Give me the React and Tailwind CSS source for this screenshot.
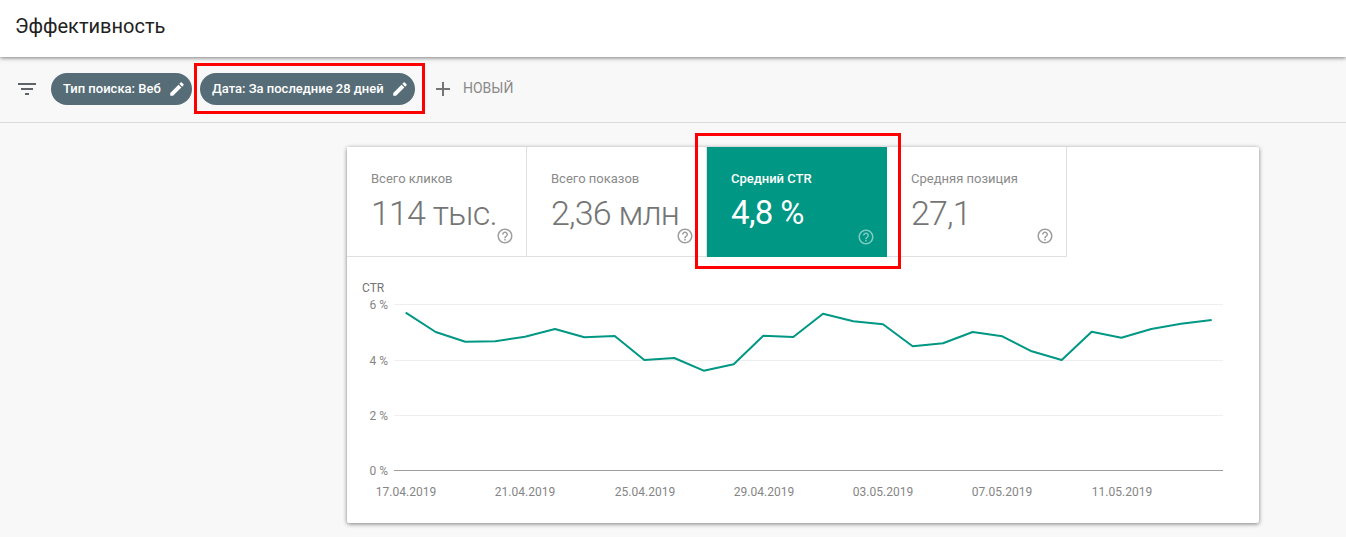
const EDIT = "M3 17.25V21h3.75L17.81 9.94l-3.75-3.75L3 17.25zM20.71 7.04c.39-.39.39-1.02 0-1.41l-2.34-2.34c-.39-.39-1.02-.39-1.41 0l-1.83 1.83 3.75 3.75 1.83-1.83z";
const HELP = "M11 18h2v-2h-2v2zm1-16C6.48 2 2 6.48 2 12s4.48 10 10 10 10-4.48 10-10S17.52 2 12 2zm0 18c-4.41 0-8-3.59-8-8s3.59-8 8-8 8 3.59 8 8-3.59 8-8 8zm0-14c-2.21 0-4 1.79-4 4h2c0-1.1.9-2 2-2s2 .9 2 2c0 2-3 1.75-3 5h2c0-2.25 3-2.5 3-5 0-2.21-1.79-4-4-4z";

function Icon({ d, className }) {
  return (
    <svg viewBox="0 0 24 24" className={className} fill="currentColor">
      <path d={d} />
    </svg>
  );
}

function Chip({ label, className }) {
  return (
    <div className={`flex h-8 items-center justify-between rounded-2xl bg-[#566d78] pl-3 pr-[6px] text-white ${className}`}>
      <span className="whitespace-nowrap text-[13px] font-medium">{label}</span>
      <Icon d={EDIT} className="h-[18px] w-[18px]" />
    </div>
  );
}

function Tab({ label, value, active }) {
  return (
    <div
      className={`relative h-[110px] w-[180px] shrink-0 pl-6 pt-6 ${
        active ? "bg-[#009784] text-white" : "border-b border-r border-[#e0e0e0] bg-white text-[#757575]"
      }`}
    >
      <div className={`text-[13px] leading-4 ${active ? "font-medium text-[12.5px]" : "text-[#8a8a8a]"}`}>{label}</div>
      <div className={`mt-[6px] whitespace-nowrap leading-10 ${active ? "text-[33px] font-normal tracking-[-0.6px]" : "text-[34px] font-light tracking-[-0.8px]"}`}>{value}</div>
      <Icon
        d={HELP}
        className={`absolute bottom-[11px] right-[12px] h-[18px] w-[18px] ${active ? "text-white/50" : "text-[#9e9e9e]"}`}
      />
    </div>
  );
}

const pts = [
  [405.7,312.7],[435.7,332],[465.3,341.7],[495.3,341.3],[525,336.7],[555,329],[584.3,337.3],[614.7,336],
  [644.3,360],[674.3,358],[703.7,370.7],[733.7,364.3],[763.3,335.7],[793.3,337],[823,313.7],[853.3,321.3],
  [883,324.3],[912.7,346.3],[943,343.3],[972.7,332],[1002.3,336.3],[1031.7,351.3],[1061.7,360],[1091.7,331.7],
  [1121.3,337.7],[1151.3,329],[1181,323.7],[1211.7,320],
];
const OX = 347, OY = 257;
const line = pts.map(([x, y]) => `${(x - OX).toFixed(1)},${(y - OY).toFixed(1)}`).join(" ");
const ticks = [["6 %", 304.5], ["4 %", 360.5], ["2 %", 415.5], ["0 %", 470.5]];
const dates = [
  ["17.04.2019", 406], ["21.04.2019", 525], ["25.04.2019", 645], ["29.04.2019", 764],
  ["03.05.2019", 883], ["07.05.2019", 1002], ["11.05.2019", 1122],
];

function Chart() {
  return (
    <svg width="912" height="266" viewBox="0 0 912 266" className="block" style={{ fontFamily: "Roboto, sans-serif" }}>
      <text x={15} y={35} fontSize="12" fill="#757575">CTR</text>
      {ticks.map(([t, y], i) => (
        <g key={t}>
          <line x1={47} x2={876} y1={y - OY} y2={y - OY} stroke={i === 3 ? "#9e9e9e" : "#eeeeee"} strokeWidth="1" />
          <text x={41} y={y - OY + 4} textAnchor="end" fontSize="12" fill="#858585">{t}</text>
        </g>
      ))}
      {dates.map(([t, x]) => (
        <text key={t} x={x - OX} y={239} textAnchor="middle" fontSize="12" fill="#858585">{t}</text>
      ))}
      <polyline points={line} fill="none" stroke="#009784" strokeWidth="2" strokeLinejoin="round" />
    </svg>
  );
}

export default function App() {
  return (
    <div className="relative h-[537px] w-[1346px] overflow-hidden bg-[#f8f8f8] font-['Roboto',sans-serif]">
      <header className="relative z-10 flex h-[57px] items-center bg-white pb-[6px] pl-[15px] text-[20px] text-[#212121] shadow-[0_1px_4px_rgba(0,0,0,0.5)]">
        Эффективность
      </header>
      <div className="flex h-[66px] items-center border-b border-[#dcdcdc] pb-[2px] pl-[15px]">
        <svg viewBox="0 0 24 24" className="h-6 w-6 text-[#5f6368]" fill="currentColor">
          <path d="M10 18h4v-2h-4v2zM3 6v2h18V6H3zm3 7h12v-2H6v2z" />
        </svg>
        <Chip label="Тип поиска: Веб" className="ml-[12px] w-[141px]" />
        <Chip label="Дата: За последние 28 дней" className="ml-[8px] w-[215px]" />
        <svg viewBox="0 0 24 24" className="ml-[16px] h-6 w-6 text-[#757575]" fill="currentColor">
          <path d="M19 13h-6v6h-2v-6H5v-2h6V5h2v6h6v2z" />
        </svg>
        <span className="ml-2 text-[14px] text-[#8a8a8a]">НОВЫЙ</span>
      </div>
      <main className="ml-[347px] mt-[24px] w-[912px] rounded-[2px] bg-white shadow-[0_1px_4px_rgba(0,0,0,0.5)]">
        <div className="flex">
          <Tab label="Всего кликов" value="114 тыс." />
          <Tab label="Всего показов" value="2,36 млн" />
          <Tab label="Средний CTR" value="4,8 %" active />
          <Tab label="Средняя позиция" value="27,1" />
        </div>
        <Chart />
      </main>
      <div className="pointer-events-none absolute left-[194px] top-[63px] h-[51px] w-[231px] border-[3px] border-[#ff0000]" />
      <div className="pointer-events-none absolute left-[695px] top-[133px] h-[136px] w-[206px] border-[3px] border-[#ff0000]" />
    </div>
  );
}
